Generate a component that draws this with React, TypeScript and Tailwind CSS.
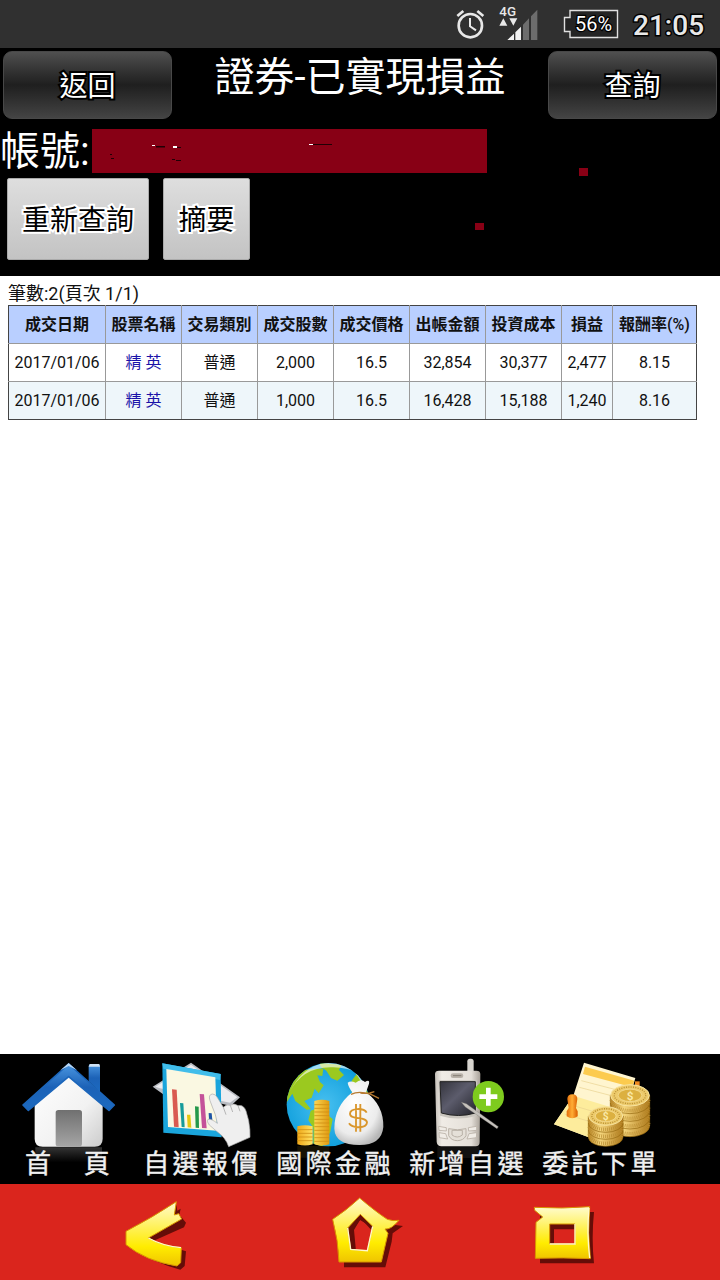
import { clsx } from "clsx";
import type { ReactNode } from "react";

const COLS = [
  { label: "成交日期", width: "w-[97px]" },
  { label: "股票名稱", width: "w-[76px]" },
  { label: "交易類別", width: "w-[76px]" },
  { label: "成交股數", width: "w-[76px]" },
  { label: "成交價格", width: "w-[76px]" },
  { label: "出帳金額", width: "w-[76px]" },
  { label: "投資成本", width: "w-[76px]" },
  { label: "損益", width: "w-[51px]" },
  { label: "報酬率(%)", width: "w-[84px]" },
];

const ROWS = [
  ["2017/01/06", "精 英", "普通", "2,000", "16.5", "32,854", "30,377", "2,477", "8.15"],
  ["2017/01/06", "精 英", "普通", "1,000", "16.5", "16,428", "15,188", "1,240", "8.16"],
];

function StatusBar() {
  return (
    <div className="flex h-12 items-center bg-[#303030] pl-[455px] text-[#e8e8e8]">
      <svg className="h-12 w-[84px] shrink-0" viewBox="45 0 252 144">
        <g fill="none" stroke="#e8e8e8">
          <circle cx="91" cy="77" r="35" strokeWidth="8" />
          <path d="M90 54v25l18 12" strokeWidth="6" />
          <path d="M52 48 70 33M130 48 112 33" strokeWidth="8" />
        </g>
        <text
          x="178"
          y="48"
          fontSize="40"
          fontWeight="500"
          fill="#e8e8e8"
          textLength="50"
          lengthAdjust="spacingAndGlyphs"
        >
          4G
        </text>
        <path d="M178 77 190 55 202 77zM208 55h24l-12 22z" fill="#e8e8e8" />
        <path d="M202 120 222 101v19zM226 97 243 80v40h-17z" fill="#f2f2f2" />
        <path d="M249 74 267 55v65h-18zM273 49 292 29v91h-19z" fill="#6d6d6d" />
      </svg>
      <div className="ml-[24px] flex h-7 w-[57px] items-center">
        <svg className="h-[30px] w-[57px]" viewBox="0 0 57 30">
          <path
            d="M7 1.5H54.5V28.5H7V22.5H1.5V8.5H7z"
            fill="#242424"
            stroke="#e0e0e0"
            strokeWidth="1.4"
          />
          <text
            x="12"
            y="22"
            fontSize="20"
            fill="#fff"
            stroke="#000"
            strokeWidth="2.5"
            paintOrder="stroke"
            textLength="37"
            lengthAdjust="spacingAndGlyphs"
          >
            56%
          </text>
        </svg>
      </div>
      <span className="ml-[13px] pt-[3px] text-[28px] leading-none font-medium [-webkit-text-stroke:3px_#000] [paint-order:stroke]">
        21:05
      </span>
    </div>
  );
}

function DarkButton({ children }: { children: ReactNode }) {
  return (
    <button
      type="button"
      className="h-[68px] w-[169px] shrink-0 rounded-[9px] border border-[#484848] bg-linear-to-b from-[#505050] via-[#1f1f1f] to-[#444] pt-1 text-[28px] leading-none text-white [-webkit-text-stroke:4px_#000] [paint-order:stroke]"
    >
      {children}
    </button>
  );
}

function LightButton({ children, className }: { children: ReactNode; className: string }) {
  return (
    <button
      type="button"
      className={clsx(
        "h-[82px] rounded-[2px] border border-[#aaa] bg-linear-to-b from-[#dedede] to-[#c3c3c3] pt-1 text-[28px] leading-none text-black [-webkit-text-stroke:4px_#fff] [paint-order:stroke]",
        className,
      )}
    >
      {children}
    </button>
  );
}

function Header() {
  return (
    <header className="relative h-[228px] bg-black text-white">
      <div className="flex justify-between px-[3px] pt-[3px]">
        <DarkButton>返回</DarkButton>
        <h1 className="pt-[5px] text-[40px] leading-[44px] whitespace-nowrap">證券-已實現損益</h1>
        <DarkButton>查詢</DarkButton>
      </div>
      <div className="mt-[10px] flex h-11 items-center">
        <span className="w-[92px] pt-[2px] text-[40px] leading-[44px] whitespace-nowrap">帳號:</span>
        <svg className="h-11 w-[395px] bg-[#880015]" viewBox="0 0 395 44">
          <path d="M60 16h3v1h-3zM81 17h4v2h-4zM217 15h4v1h-4z" fill="#fff" />
          <path
            d="M64 17h9v1.500h-9zM85 18h4v1h-4zM221 15h19v1h-19zM80 30h3v1h-3zM84 31h5v1h-5zM18 25h2v1h-2zM19 29h3v1h-3z"
            fill="#200005"
          />
        </svg>
      </div>
      <div className="mt-[5px] flex gap-[14px] pl-[7px]">
        <LightButton className="w-[142px]">重新查詢</LightButton>
        <LightButton className="w-[87px]">摘要</LightButton>
      </div>
      <span className="absolute top-[120px] left-[579px] h-2 w-[9px] bg-[#880015]" />
      <span className="absolute top-[175px] left-[475px] h-[7px] w-[9px] bg-[#880015]" />
    </header>
  );
}

function TradeTable() {
  return (
    <main className="h-[778px] bg-white pt-[7px] pl-2 text-[#111]">
      <p className="h-[22px] text-[18px] leading-[22px]">筆數:2(頁次 1/1)</p>
      <table className="w-[689px] table-fixed border-collapse border border-[#444] text-center text-[16px] leading-none">
        <thead>
          <tr className="h-[38px] bg-[#b9cfff]">
            {COLS.map((c) => (
              <th
                key={c.label}
                className={clsx(
                  "border border-[#999] border-t-[#444] p-0 font-bold whitespace-nowrap first:border-l-[#444] last:border-r-[#444]",
                  c.width,
                )}
              >
                {c.label.replace("(%)", "")}
                {c.label.endsWith("(%)") && <span className="font-medium">(%)</span>}
              </th>
            ))}
          </tr>
        </thead>
        <tbody>
          {ROWS.map((row, i) => (
            <tr key={i} className="h-[38px] even:bg-[#eef6fa]">
              {row.map((cell, j) => (
                <td
                  key={j}
                  className={clsx(
                    "border border-[#999] p-0 whitespace-nowrap first:border-l-[#444] last:border-r-[#444]",
                    j === 1 && "text-[#1a12a8]",
                    i === ROWS.length - 1 && "border-b-[#444]",
                  )}
                >
                  {cell}
                </td>
              ))}
            </tr>
          ))}
        </tbody>
      </table>
    </main>
  );
}

function HouseIcon() {
  return (
    <svg className="h-[90px] w-[133px] overflow-visible" viewBox="0 12 399 270">
      <defs>
        <linearGradient id="roof" x2="0" y2="1">
          <stop stopColor="#4a96e0" />
          <stop offset=".5" stopColor="#1c62b7" />
          <stop offset="1" stopColor="#1c6ac0" />
        </linearGradient>
        <linearGradient id="wall" x2="1" y2="1">
          <stop stopColor="#fff" />
          <stop offset=".6" stopColor="#f2f2f2" />
          <stop offset="1" stopColor="#ccc" />
        </linearGradient>
        <linearGradient id="door" x2="0" y2="1">
          <stop stopColor="#707070" />
          <stop offset="1" stopColor="#a5a5a5" />
        </linearGradient>
        <linearGradient id="shade" x2="0" y2="1">
          <stop stopColor="#333" />
          <stop offset="1" stopColor="#000" />
        </linearGradient>
      </defs>
      <path d="M106 292h200v45H106z" fill="url(#shade)" />
      <path d="M266 50q0-8 8-8h18q8 0 8 8v76l-34-32z" fill="url(#roof)" />
      <path d="M269 42h29l2 8h-34z" fill="#cfe2f5" />
      <path d="M206 66 308 160v106q0 24-24 24H128q-24 0-24-24V160z" fill="url(#wall)" />
      <path
        d="M206 42 343 165 327 181 206 80 85 181 69 165z"
        fill="url(#roof)"
        stroke="#1c66bb"
        strokeWidth="5"
        strokeLinejoin="round"
      />
      <path d="M181 61 206 39 231 61 206 48z" fill="#b9d6f2" />
      <rect x="167" y="180" width="79" height="109" rx="8" fill="url(#door)" />
    </svg>
  );
}

function ChartIcon() {
  return (
    <svg className="h-[90px] w-[133px] overflow-visible" viewBox="399 12 399 270">
      <path d="M573 38 720 142 692 168 660 160 500 140 458 110z" fill="#b9bcc2" />
      <path d="M573 44 712 142 690 158 480 115 466 110z" fill="#ececf0" />
      <path d="M487 40 662 72 665 262 490 248z" fill="#1aa5dc" />
      <path d="M487 40 662 72 660 90 490 56z" fill="#41bdea" />
      <path d="M499 57 646 82 651 242 504 231z" fill="#faf8e2" />
      <path d="M516 118 530 119 536 232 522 230z" fill="#d95a50" />
      <path d="M540 159 550 160 554 232 545 231z" fill="#159b9b" />
      <path d="M561 194 571 194 574 233 563 232z" fill="#e3c811" />
      <path d="M585 169 596 170 597 234 587 233z" fill="#24984a" />
      <path d="M599 132 612 133 620 235 606 234z" fill="#c45299" />
      <path d="M626 189 635 190 637 210 627 209z" fill="#1f55a5" />
      <path
        d="M630 152Q624 134 637 132 646 131 653 144L670 172Q679 161 691 166 702 158 714 167 731 163 738 183L746 212Q751 240 750 262L686 290Q678 264 650 244L628 225Q619 213 624 208 633 205 652 220L646 194z"
        fill="#efefef"
        stroke="#aaa"
        strokeWidth="2"
        strokeLinejoin="round"
      />
      <path d="M670 172 678 194M691 166 698 186M714 167 720 184" fill="none" stroke="#aaa" strokeWidth="2.5" />
    </svg>
  );
}

function GlobeIcon() {
  return (
    <svg className="h-[90px] w-[133px] overflow-visible" viewBox="3 12 399 270">
      <defs>
        <clipPath id="earth">
          <circle cx="190" cy="164" r="125" />
        </clipPath>
        <radialGradient id="sea" cx=".45" cy=".5" r=".55">
          <stop stopColor="#48c0f0" />
          <stop offset="1" stopColor="#0a9bda" />
        </radialGradient>
        <linearGradient id="gold">
          <stop stopColor="#f0a818" />
          <stop offset=".45" stopColor="#ffe060" />
          <stop offset="1" stopColor="#e09a10" />
        </linearGradient>
        <radialGradient id="bag" cx=".4" cy=".35" r=".7">
          <stop stopColor="#fff" />
          <stop offset=".7" stopColor="#ececec" />
          <stop offset="1" stopColor="#b7b7b7" />
        </radialGradient>
      </defs>
      <path d="M97 288h96v35H97z" fill="#171204" />
      <g clipPath="url(#earth)">
        <path d="M60 35h260v260H60z" fill="url(#sea)" />
        <path
          d="M60 145 85 90 118 60 175 55 172 78 157 76 165 96 176 106 161 130 149 116 140 143 118 153 138 178 125 179 91 153 82 131 63 160zM137 182 160 174 203 207 196 245 171 290 145 290 145 234 130 210zM164 38 229 45 222 60 237 75 217 92 198 84 184 62 167 50zM260 92 275 72 310 130 312 190 280 155 260 125z"
          fill="#9bc91f"
        />
        <path d="M72 130Q112 48 205 52T292 104Q260 31 187 38T72 130z" fill="#fff" opacity=".6" />
      </g>
      <path d="M97 229q23-7 46 0v54q-23 7-46 0zM148 153q22-7 45 0v130q-22 7-45 0z" fill="url(#gold)" />
      <path
        d="M97 239h46M97 250h46M97 261h46M97 272h46M148 164h45M148 175h45M148 186h45M148 197h45M148 208h45M148 219h45M148 230h45M148 241h45M148 252h45M148 263h45M148 274h45"
        stroke="#d08f14"
        strokeWidth="2.5"
      />
      <path
        d="M262 127Q250 111 248 98 257 91 272 98 288 84 300 96 315 87 312 101L303 127Q356 165 355 231 350 285 283 285 210 284 208 236 208 169 262 127z"
        fill="url(#bag)"
      />
      <path d="M258 133Q282 121 318 133L342 145M286 130 315 129 328 125" fill="none" stroke="#b77b32" strokeWidth="4" />
      <path
        d="M305 188C298 174 256 172 255 191 255 211 306 198 306 218 304 236 262 236 252 220M273 162v83M286 162v83"
        fill="none"
        stroke="#d9962c"
        strokeWidth="5.5"
      />
    </svg>
  );
}

function PhoneIcon() {
  return (
    <svg className="h-[90px] w-[133px] overflow-visible" viewBox="-3 12 399 270">
      <defs>
        <linearGradient id="phone">
          <stop stopColor="#c4bfb8" />
          <stop offset=".15" stopColor="#f0ece6" />
          <stop offset=".8" stopColor="#e4dfd8" />
          <stop offset="1" stopColor="#a9a299" />
        </linearGradient>
        <linearGradient id="screen" x2="1" y2="1">
          <stop stopColor="#34343c" />
          <stop offset=".45" stopColor="#5c5c6c" />
          <stop offset="1" stopColor="#24242b" />
        </linearGradient>
      </defs>
      <path d="M112 289h126v35H112z" fill="#121110" />
      <rect x="202" y="26" width="19" height="48" rx="8" fill="#d7d4cf" />
      <path d="M105 72q0-10 12-10h112q12 0 12 10l-2 204q0 13-12 13H124q-12 0-14-13z" fill="url(#phone)" />
      <rect x="152" y="70" width="38" height="14" rx="7" fill="#b8b1a8" />
      <path d="M159 77h25" stroke="#857e75" strokeWidth="3" />
      <path d="M115 91h116v106q-58 17-111 0z" fill="#c9c5be" />
      <path d="M120 95h106v94q-50 15-102 0z" fill="url(#screen)" stroke="#222" strokeWidth="3" />
      <path
        d="M146 236q27 7 52 0v21q-8 15-26 15t-26-15zM156 241h31v14q-15 12-31 0z"
        fill="#e5e0d8"
        stroke="#b9b1a7"
        strokeWidth="3"
      />
      <path
        d="M116 229 139 233v10l-22-2zM117 248 137 251 143 267 118 263zM205 233 230 229v12l-24 2zM207 251 230 248 229 263 201 267z"
        fill="#f0ece6"
        stroke="#b9b1a7"
        strokeWidth="2.5"
      />
      <circle cx="265" cy="140" r="47" fill="#7ecb1e" />
      <path d="M258 113h14v20h20v14h-20v20h-14v-20h-20v-14h20z" fill="#fff" />
      <path d="M184 157 199 161 295 230 291 236 196 171z" fill="#c5c1bc" stroke="#77736c" strokeWidth="1" />
    </svg>
  );
}

type CoinStackProps = { x: number; y: number; rx: number; ry: number; layers: number; pitch: number };

function CoinStack({ x, y, rx, ry, layers, pitch }: CoinStackProps) {
  return (
    <g>
      {Array.from({ length: layers }, (_, i) => layers - i).map((n) => {
        const cy = y + n * pitch;
        return (
          <g key={n}>
            <path
              d={`M${x - rx} ${cy - pitch}v${pitch}a${rx} ${ry} 0 0 0 ${rx * 2} 0v${-pitch}z`}
              fill="url(#coin)"
              stroke="#94680f"
              strokeWidth="2"
            />
            <path
              d={`M${x - rx + 3} ${cy - 9}a${rx - 3} ${ry} 0 0 0 ${rx * 2 - 6} 0`}
              fill="none"
              stroke="#b98c30"
              strokeWidth="10"
              strokeDasharray="2 4"
            />
          </g>
        );
      })}
      <ellipse cx={x} cy={y} rx={rx - 1} ry={ry} fill="#edcb6c" stroke="#f7e3a0" strokeWidth="3" />
      <ellipse
        cx={x}
        cy={y}
        rx={rx * 0.8}
        ry={ry * 0.78}
        fill="none"
        stroke="#b78d32"
        strokeWidth="4"
        strokeDasharray="3 4"
      />
      <ellipse cx={x} cy={y} rx={rx * 0.6} ry={ry * 0.58} fill="#dcb040" stroke="#f7e3a0" strokeWidth="2" />
      <text x={x} y={y + ry * 0.4} fontSize={ry * 1.1} textAnchor="middle" fill="#fae9a8" fontWeight="bold">
        $
      </text>
    </g>
  );
}

function OrderIcon() {
  return (
    <svg className="h-[90px] w-[133px] overflow-visible" viewBox="396 12 399 270">
      <defs>
        <linearGradient id="coin">
          <stop stopColor="#b98525" />
          <stop offset=".35" stopColor="#f4d57c" />
          <stop offset="1" stopColor="#ae7819" />
        </linearGradient>
        <linearGradient id="stamp">
          <stop stopColor="#e56c08" />
          <stop offset=".5" stopColor="#ffad35" />
          <stop offset="1" stopColor="#d95c00" />
        </linearGradient>
      </defs>
      <path d="M552 38 706 84 660 240 566 262 462 223 520 137z" fill="#fff5cf" />
      <path d="M520 137 660 180 640 240 566 262 462 223z" fill="#fdec9c" />
      <path d="M555 50 703 92 697 112 549 72z" fill="#fccb4e" />
      <path d="M544 92 690 130M538 112 684 150M524 168 650 205M494 192 640 236" stroke="#e8d190" strokeWidth="2" />
      <path d="M705 94h14v18h-14z" fill="#ed8a22" />
      <path d="M502 147q0-14 15-14t15 14l-4 27 5 10v15q-16 12-33 0v-15l6-10z" fill="url(#stamp)" />
      <CoinStack x={690} y={136} rx={59} ry={32} layers={4} pitch={23} />
      <CoinStack x={617} y={198} rx={52} ry={28} layers={3} pitch={21} />
    </svg>
  );
}

const TABS = [
  { label: "首　頁", icon: <HouseIcon /> },
  { label: "自選報價", icon: <ChartIcon /> },
  { label: "國際金融", icon: <GlobeIcon /> },
  { label: "新增自選", icon: <PhoneIcon /> },
  { label: "委託下單", icon: <OrderIcon /> },
];

function TabBar() {
  return (
    <nav className="flex h-[130px] bg-black text-white">
      {TABS.map((t) => (
        <button key={t.label} type="button" className="flex w-[133px] flex-col">
          {t.icon}
          <span className="relative block h-10 w-full pl-[5px] text-center text-[26px] leading-10 tracking-[3.4px] whitespace-nowrap text-[#f0f0f0] [-webkit-text-stroke:0.4px_#f0f0f0]">
            {t.label}
          </span>
        </button>
      ))}
    </nav>
  );
}

function SystemNav() {
  return (
    <nav className="flex h-24 bg-[#da251d]">
      <svg className="h-24 w-60" viewBox="-300 12 720 288">
        <defs>
          <linearGradient id="nav" x2="0" y2="1">
            <stop stopColor="#fffbd0" />
            <stop offset=".45" stopColor="#fff04a" />
            <stop offset=".7" stopColor="#ffec00" />
            <stop offset="1" stopColor="#efc400" />
          </linearGradient>
        </defs>
        <path
          d="M229 75 232 92 242 86 238 104 258 128 252 142 158 184 258 214 254 258 241 269Q164 250 100 205z"
          fill="#650d08"
        />
        <path
          d="M229 65 223 105 236 101 245 117 145 174Q188 198 244 203L242 248 231 258Q137 243 78 194V154Q158 112 229 65z"
          fill="url(#nav)"
          stroke="#d99500"
          strokeWidth="3"
          strokeLinejoin="round"
        />
        <path d="M145 174Q188 198 243 203" fill="none" stroke="#fff9cb" strokeWidth="4" />
      </svg>
      <svg className="h-24 w-60" viewBox="420 12 720 288">
        <path
          d="M794 68 880 134 909 138 878 160 875 185 856 262H732V200L714 134zM780 120 762 150 768 214 800 216 826 148z"
          fillRule="evenodd"
          fill="#650d08"
        />
        <path d="M743 144 781 103 818 139 814 150 783 116 757 150 763 208 752 208z" fill="#650d08" />
        <path
          d="M779 54Q827 95 862 118 878 124 897 121 872 150 855 147L864 160 844 246H717Q715 182 698 118 738 92 779 54zM781 103 743 144 752 208 802 212 818 139z"
          fillRule="evenodd"
          fill="url(#nav)"
          stroke="#d99500"
          strokeWidth="3"
          strokeLinejoin="round"
        />
        <path d="M743 144 752 208 802 212 818 139" fill="none" stroke="#fff9cb" strokeWidth="4" />
      </svg>
      <svg className="h-24 w-60" viewBox="-60 12 720 288">
        <path
          d="M120 96H282Q274 176 282 250H120zM162 148V202H230V148z"
          fillRule="evenodd"
          fill="#650d08"
        />
        <path
          d="M103 82Q188 87 269 80 262 158 271 236 192 232 106 235L108 127 128 111 104 91zM149 132V192H225V132z"
          fillRule="evenodd"
          fill="url(#nav)"
          stroke="#d99500"
          strokeWidth="3"
          strokeLinejoin="round"
        />
        <path d="M149 192H225V132M267 84Q260 158 269 234" fill="none" stroke="#fff9cb" strokeWidth="4" />
      </svg>
    </nav>
  );
}

export default function App() {
  return (
    <div className="h-[1280px] w-[720px] overflow-hidden bg-white font-[Roboto,'Noto_Sans_CJK_TC',sans-serif]">
      <StatusBar />
      <Header />
      <TradeTable />
      <TabBar />
      <SystemNav />
    </div>
  );
}
